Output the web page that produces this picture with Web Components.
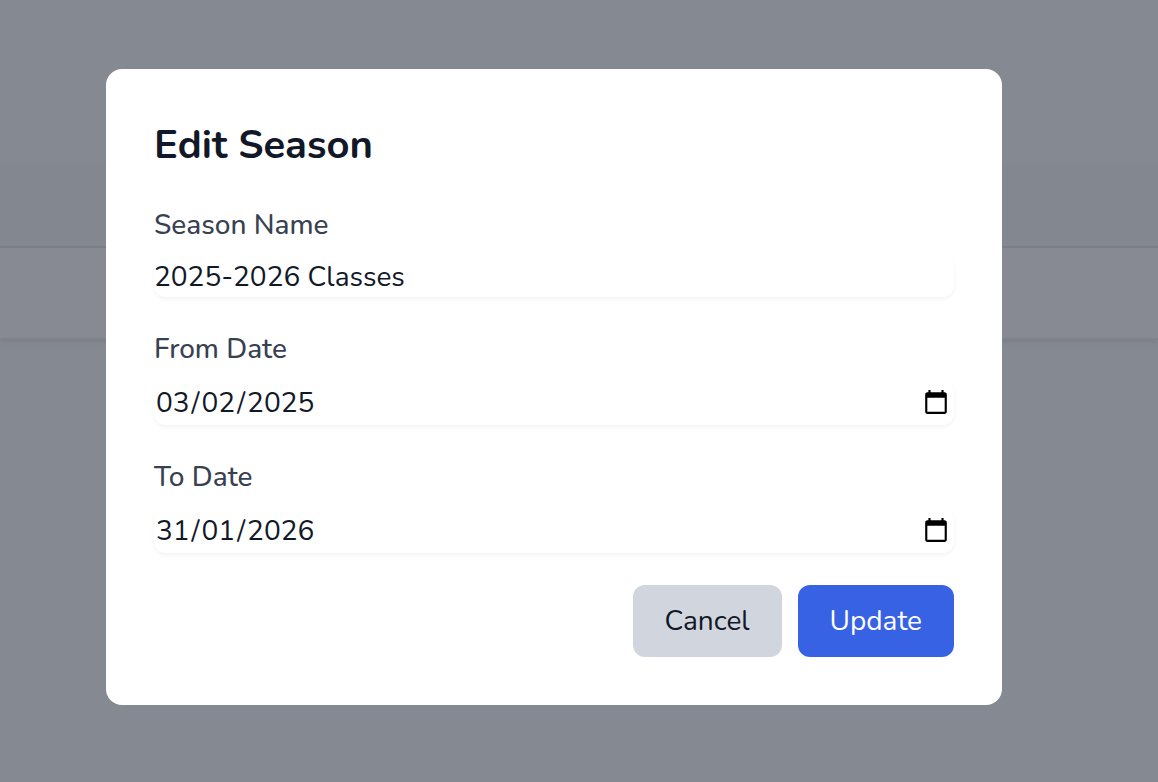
<!DOCTYPE html>
<html lang="en-GB">
<head>
<meta charset="utf-8">
<meta name="viewport" content="width=device-width, initial-scale=1">
<title>Edit Season</title>
<style>
html, body { height: 100%; }
body { margin: 0; background: #858991; color: #111827; font: 28px/40px Nunito, Lato, sans-serif; }
</style>
</head>
<body>
<season-backdrop></season-backdrop>
<modal-overlay>
  <modal-card heading="Edit Season">
    <form-field label="Season Name" value="2025-2026 Classes"></form-field>
    <form-field label="From Date" value="2025-02-03" type="date"></form-field>
    <form-field label="To Date" value="2026-01-31" type="date"></form-field>
    <action-button slot="actions">Cancel</action-button>
    <action-button slot="actions" variant="primary">Update</action-button>
  </modal-card>
</modal-overlay>
<script>
class BaseElement extends HTMLElement {
  render(html) {
    const t = document.createElement('template');
    t.innerHTML = html;
    this.attachShadow({ mode: 'open' }).append(t.content.cloneNode(true));
  }
}

customElements.define('season-backdrop', class extends BaseElement {
  connectedCallback() {
    this.render(`<style>
      :host { display: block; position: fixed; inset: 0; overflow: hidden; }
      .bar { height: 164px; background: #858991; }
      .list { box-shadow: 0 2px 4px #7c7e87; }
      .head { height: 82px; background: #83878f; border-bottom: 2px solid #7b7d88; }
      .row { height: 90px; background: #878a93; border-bottom: 2px solid #7f818b; }
    </style><div class="bar"></div><div class="list"><div class="head"></div><div class="row"></div></div>`);
  }
});

customElements.define('modal-overlay', class extends BaseElement {
  connectedCallback() {
    this.render(`<style>
      :host { position: relative; display: flex; align-items: center; justify-content: center;
        box-sizing: border-box; min-height: 100%; padding: 0 50px 8px 0; }
    </style><slot></slot>`);
  }
});

customElements.define('modal-card', class extends BaseElement {
  connectedCallback() {
    this.render(`<style>
      :host { display: block; box-sizing: border-box; width: 100%; max-width: 896px;
        padding: 48px; border-radius: 16px; background: #fff; }
      h2 { margin: 0 0 32px; font-size: 40px; line-height: 56px; font-weight: 700; }
      form { display: flex; flex-direction: column; gap: 32px; }
      .actions { display: flex; justify-content: flex-end; gap: 16px; }
    </style>
    <section role="dialog" aria-labelledby="heading">
      <h2 id="heading">${this.getAttribute('heading')}</h2>
      <form><slot></slot><div class="actions"><slot name="actions"></slot></div></form>
    </section>`);
  }
});

customElements.define('form-field', class extends BaseElement {
  connectedCallback() {
    this.render(`<style>
      :host { display: block; }
      label { display: block; margin-bottom: 12px; color: #374151; font-weight: 500; }
      input { display: block; box-sizing: border-box; width: 100%; height: 40px; margin: 0; padding: 0;
        border: 0; border-radius: 12px; outline: 0; background: #fff; color: #111827; font: inherit;
        box-shadow: 0 2px 4px rgba(0, 0, 0, .05); }
      input[type="date"] { height: 44px; padding: 2px 4px 2px 0; }
      /* Day / month / year, whatever the browser's own locale is */
      ::-webkit-datetime-edit { padding: 0; }
      ::-webkit-datetime-edit-fields-wrapper { display: inline-grid; grid-auto-flow: column; padding: 0; }
      ::-webkit-datetime-edit-day-field { grid-area: 1 / 1; padding: 0 2px; }
      ::-webkit-datetime-edit-month-field { grid-area: 1 / 3; padding: 0 2px; }
      ::-webkit-datetime-edit-year-field { grid-area: 1 / 5; padding: 0 2px; }
      ::-webkit-datetime-edit-text { grid-row: 1; padding: 0; }
      ::-webkit-calendar-picker-indicator { width: 28px; height: 28px; padding: 0; }
    </style>
    <label for="control">${this.getAttribute('label')}</label>
    <input id="control" type="${this.getAttribute('type') || 'text'}" value="${this.getAttribute('value')}">`);
  }
});

customElements.define('action-button', class extends BaseElement {
  connectedCallback() {
    this.render(`<style>
      :host { display: block; }
      button { display: block; margin: 0; padding: 16px 32px; border: 0; border-radius: 12px;
        background: #d1d5dd; color: #111827; font: inherit; }
      :host([variant="primary"]) button { background: #3762e3; color: #fff; }
    </style><button type="button"><slot></slot></button>`);
  }
});
</script>
</body>
</html>
